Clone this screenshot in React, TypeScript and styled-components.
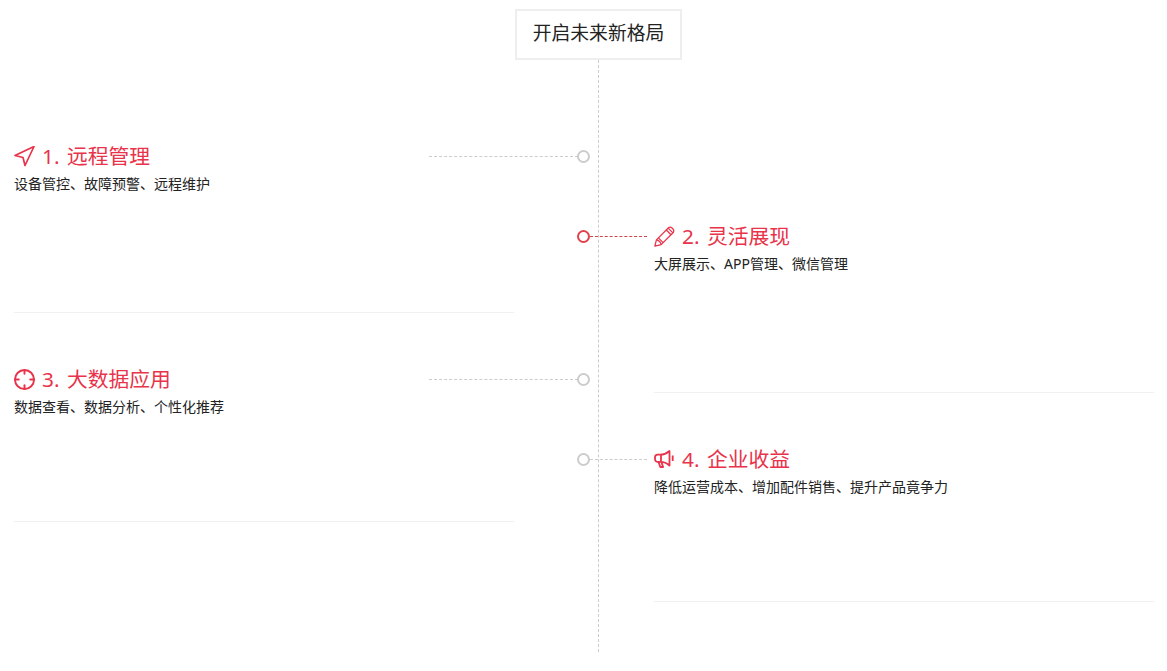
import styled, { createGlobalStyle } from "styled-components";
import { Crosshair, Navigation } from "lucide-react";
import type { ReactNode } from "react";

const RED = "#e8334a";

const GlobalStyle = createGlobalStyle`
  html, body {
    margin: 0;
    padding: 0;
    background: #fff;
  }

  body {
    font-family: "Noto Sans", "Noto Sans CJK SC", sans-serif;
    color: #222;
  }
`;

const Page = styled.div`
  position: relative;
  width: 1167px;
  height: 671px;
  overflow: hidden;
  padding-top: 9px;
  box-sizing: border-box;
`;

const Header = styled.h3`
  box-sizing: border-box;
  width: 167px;
  height: 51px;
  margin: 0 auto 0 515px;
  border: 2px solid #eee;
  font-size: 18.8px;
  font-weight: 400;
  line-height: 45px;
  text-align: center;
  color: #222;
`;

const CenterLine = styled.div`
  position: absolute;
  left: 598px;
  top: 60px;
  height: 592px;
  border-left: 1px dashed #ccc;
`;

const Columns = styled.div`
  display: flex;
  gap: 140px;
  padding-left: 14px;
`;

const Column = styled.div<{ $offset: number }>`
  width: 500px;
  padding-top: ${(p) => p.$offset}px;
`;

const Item = styled.article<{ $first?: boolean }>`
  position: relative;
  box-sizing: border-box;
  height: ${(p) => (p.$first ? 170 : 209)}px;
  padding-top: ${(p) => (p.$first ? 0 : 53)}px;
  border-bottom: 1px solid #f0f0f0;
`;

const Title = styled.h4`
  display: flex;
  align-items: center;
  gap: 7px;
  height: 26px;
  margin: 0;
  font-size: 20.8px;
  font-weight: 400;
  line-height: 26px;
  word-spacing: 2px;
  color: ${RED};

  svg {
    flex: none;
    width: 21px;
    height: 21px;
  }
`;

const Summary = styled.p`
  margin: 5px 0 0;
  font-size: 14px;
  line-height: 20px;
  color: #222;
`;

const Connector = styled.span<{ $side: "left" | "right"; $active?: boolean; $first?: boolean }>`
  position: absolute;
  top: ${(p) => (p.$first ? 13 : 66)}px;
  height: 0;
  width: ${(p) => (p.$side === "left" ? 149 : 57)}px;
  border-top: 1px dashed ${(p) => (p.$active ? "#c9474f" : "#ccc")};
  ${(p) => (p.$side === "left" ? "left: 415px;" : "right: 507px;")}
`;

const Dot = styled.i<{ $side: "left" | "right"; $active?: boolean }>`
  position: absolute;
  top: -7px;
  ${(p) => (p.$side === "left" ? "right: -12px;" : "left: -13px;")}
  box-sizing: border-box;
  width: 13px;
  height: 13px;
  border: 2.5px solid ${(p) => (p.$active ? "#e0434b" : "#ccc")};
  border-radius: 50%;
  background: #fff;
`;

const PencilIcon = () => (
  <svg viewBox="0 0 20 20" fill="none" stroke="currentColor" strokeWidth="1.2" strokeLinejoin="round">
    <path d="M.8 19.200l1.500-6L13.600 1.900c1-1 2.600-1 3.600 0l.9.9c1 1 1 2.600 0 3.600L6.800 17.700.8 19.200z" />
    <path d="M2.300 13.200c2 .2 4.300 2.500 4.500 4.500M4.200 11.300l4.500 4.500M11.700 3.800l4.500 4.500M13.500 2l4.500 4.500" />
  </svg>
);

const BullhornIcon = () => (
  <svg viewBox="0 0 21 21" fill="none" stroke="currentColor" strokeWidth="1.8" strokeLinejoin="round">
    <path d="M15.500 2v14.500c-3-2.800-5.500-3.700-9-3.700H3.700c-1.500 0-2.700-1.200-2.700-2.700V8.400c0-1.500 1.200-2.700 2.700-2.700h2.800c3.500 0 6-1.100 9-3.700z" />
    <path d="M4.500 13l1.800 5h2.800L7.500 13.200M7 6v6.500" />
    <path d="M18.700 6.500v5.500" />
  </svg>
);

type Entry = {
  icon: ReactNode;
  title: string;
  summary: string;
  active?: boolean;
};

const leftEntries: Entry[] = [
  { icon: <Navigation viewBox="2 1.500 21 21" strokeWidth={1.7} />, title: "1. 远程管理", summary: "设备管控、故障预警、远程维护" },
  { icon: <Crosshair viewBox="1 1 22 22" strokeWidth={2} />, title: "3. 大数据应用", summary: "数据查看、数据分析、个性化推荐" },
];

const rightEntries: Entry[] = [
  { icon: <PencilIcon />, title: "2. 灵活展现", summary: "大屏展示、APP管理、微信管理", active: true },
  { icon: <BullhornIcon />, title: "4. 企业收益", summary: "降低运营成本、增加配件销售、提升产品竟争力" },
];

const renderEntries = (entries: Entry[], side: "left" | "right") =>
  entries.map((entry, index) => (
    <Item key={entry.title} $first={index === 0}>
      <Title>
        {entry.icon}
        {entry.title}
      </Title>
      <Summary>{entry.summary}</Summary>
      <Connector $side={side} $active={entry.active} $first={index === 0}>
        <Dot $side={side} $active={entry.active} />
      </Connector>
    </Item>
  ));

export default function App() {
  return (
    <Page>
      <GlobalStyle />
      <Header>开启未来新格局</Header>
      <CenterLine />
      <Columns>
        <Column $offset={83}>{renderEntries(leftEntries, "left")}</Column>
        <Column $offset={163}>{renderEntries(rightEntries, "right")}</Column>
      </Columns>
    </Page>
  );
}
